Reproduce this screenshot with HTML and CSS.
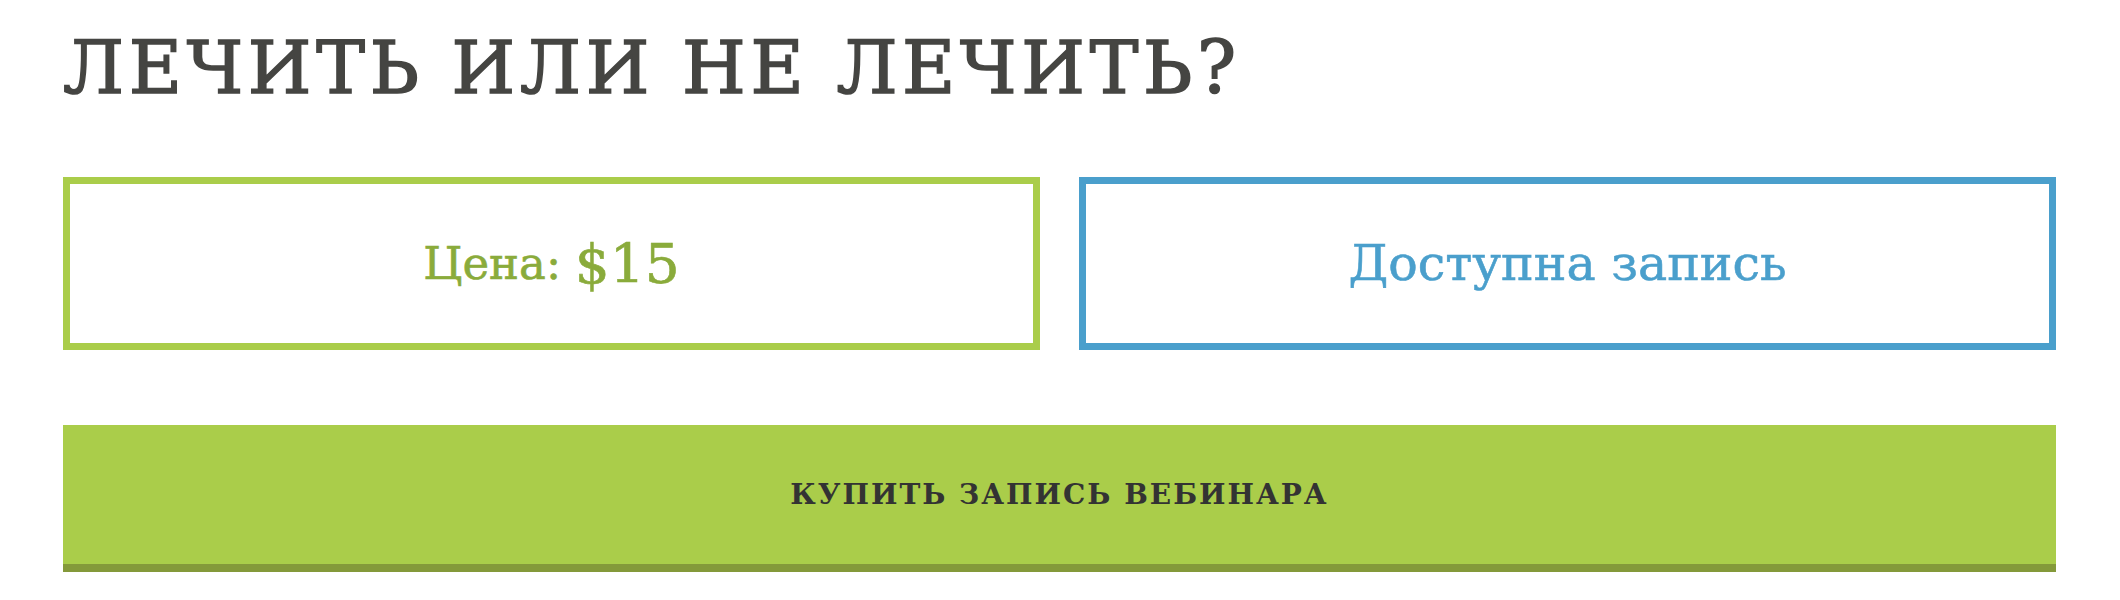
FILE: index.html
```html
<!DOCTYPE html>
<html lang="ru">
<head>
<meta charset="UTF-8">
<title>Лечить или не лечить?</title>
<link rel="stylesheet" href="styles.css">
</head>
<body>

  <div class="webinar">

    <h1 class="title">Лечить или не лечить?</h1>

    <div class="info">
      <div class="box price">Цена: <span class="sum">$15</span></div>
      <div class="box state">Доступна запись</div>
    </div>

    <a class="buy" href="#">Купить запись вебинара</a>

  </div>

</body>
</html>
```

FILE: styles.css
```css
body
{
  margin : 0;
  background : #FFF;
  font-family : "DejaVu Serif", "Liberation Serif", serif;
}

.webinar
{
  width : 1993px;
  padding : 0 0 0 63px;
}

.title
{
  margin : 28px 0 0;
  font-size : 73px;
  line-height : 80px;
  font-weight : normal;
  letter-spacing : 0.065em;
  text-transform : uppercase;
  color : #454542;
  /* шрифт потолще, без расширения букв */
  -webkit-text-stroke : 1.6px #454542;
}

/* две рамки: цена и статус */
.info
{
  display : flex;
  gap : 39px;
  margin-top : 69px;
}

.box
{
  flex : 1;
  height : 159px;
  border : 7px solid;
  display : flex;
  align-items : center;
  justify-content : center;
  font-size : 45px;
  -webkit-text-stroke : 0.6px currentColor;
}

.price
{
  border-color : #AACD4A;
  color : #8AAB3B;
}
.price .sum
{
  font-size : 55px;
  margin-left : 0.25em;
}

.state
{
  border-color : #4A9FCC;
  color : #4A9FCC;
  font-size : 49px;
}

.buy
{
  display : flex;
  align-items : center;
  justify-content : center;
  margin-top : 75px;
  height : 139px;
  background : #AACD4A;
  border-bottom : 8px solid #84993A;
  color : #333;
  text-decoration : none;
  text-transform : uppercase;
  font-weight : bold;
  font-size : 28px;
  letter-spacing : 2px;
}
```
